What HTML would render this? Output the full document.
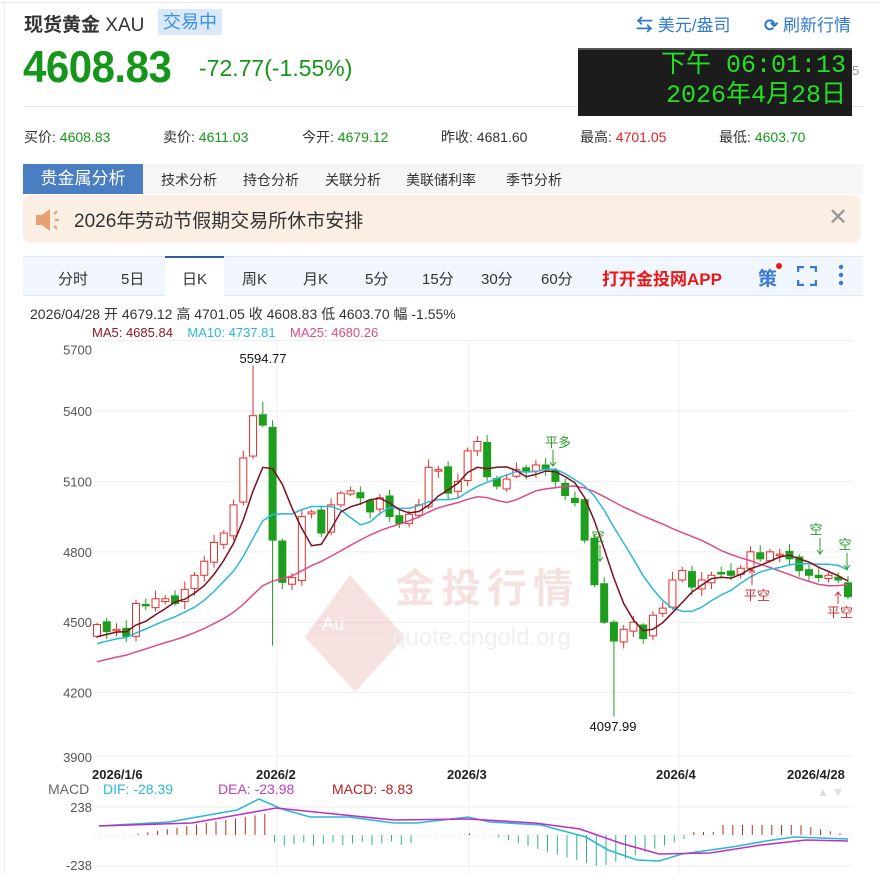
<!DOCTYPE html>
<html><head><meta charset="utf-8"><style>
*{margin:0;padding:0;box-sizing:border-box}
body{width:879px;height:874px;background:#fff;font-family:"Liberation Sans","Noto Sans CJK SC",sans-serif;position:relative;overflow:hidden;color:#333}
.a{position:absolute;white-space:nowrap}
</style></head><body>
<div class="a" style="left:0;top:2px;width:879px;height:1px;background:#e8e8e8"></div>
<div class="a" style="left:4px;top:3px;width:1px;height:871px;background:#eee"></div>
<div class="a" style="left:24px;top:10px;font-size:19px;font-weight:bold;color:#333">现货黄金 <span style="font-weight:normal">XAU</span></div>
<div class="a" style="left:158px;top:9px;width:64px;height:26px;background:#d9e9f8;color:#3a8ee6;font-size:18px;line-height:26px;text-align:center">交易中</div>
<div class="a" style="left:636px;top:11px;font-size:17px;color:#2f7ad0"><b>⇆</b> 美元/盎司</div>
<div class="a" style="left:764px;top:11px;font-size:17px;color:#2f7ad0"><b>⟳</b> 刷新行情</div>
<div class="a" style="left:23px;top:42px;font-size:42px;font-weight:bold;color:#15961a;letter-spacing:-0.5px;transform:scaleY(1.05);transform-origin:left top">4608.83</div>
<div class="a" style="left:199px;top:55px;font-size:23px;color:#15961a">-72.77(-1.55%)</div>
<div class="a" style="left:24px;top:106px;width:840px;height:1px;background:#e4e4e4"></div>
<div class="a" style="left:578px;top:48px;width:274px;height:68px;background:#1c1c1c;border-top:2px solid #555"></div>
<div class="a" style="left:580px;top:51px;width:266px;text-align:right;font-family:'Liberation Mono','Noto Sans CJK SC',monospace;color:#22e022;font-size:25px;line-height:30px">下午 06:01:13<br>2026年4月28日</div>
<div class="a" style="left:852px;top:63px;font-size:13px;color:#999">5</div>
<div class="a" style="left:24px;top:127px;font-size:14px;color:#333">买价: <span style="color:#15961a">4608.83</span></div>
<div class="a" style="left:163px;top:127px;font-size:14px">卖价: <span style="color:#15961a">4611.03</span></div>
<div class="a" style="left:302px;top:127px;font-size:14px">今开: <span style="color:#15961a">4679.12</span></div>
<div class="a" style="left:441px;top:127px;font-size:14px">昨收: 4681.60</div>
<div class="a" style="left:580px;top:127px;font-size:14px">最高: <span style="color:#d22">4701.05</span></div>
<div class="a" style="left:719px;top:127px;font-size:14px">最低: <span style="color:#15961a">4603.70</span></div>
<div class="a" style="left:23px;top:164px;width:840px;height:30px;background:#f6f6f6"></div>
<div class="a" style="left:23px;top:164px;width:120px;height:30px;background:#4a7ec2;color:#fff;font-size:17px;line-height:30px;text-align:center">贵金属分析</div>
<div class="a" style="left:161px;top:170px;font-size:14px">技术分析</div>
<div class="a" style="left:243px;top:170px;font-size:14px">持仓分析</div>
<div class="a" style="left:325px;top:170px;font-size:14px">关联分析</div>
<div class="a" style="left:406px;top:170px;font-size:14px">美联储利率</div>
<div class="a" style="left:506px;top:170px;font-size:14px">季节分析</div>
<div class="a" style="left:23px;top:195px;width:838px;height:48px;background:#fbeee3;border-radius:8px"></div>
<svg class="a" style="left:34px;top:207px" width="28" height="26" viewBox="0 0 28 26"><path d="M2 8h6l8-6v22l-8-6H2z" fill="#e8a070"/><path d="M20 7l3-3M21 13h4M20 19l3 3" stroke="#e8a070" stroke-width="2"/></svg>
<div class="a" style="left:74px;top:206px;font-size:19px;color:#333">2026年劳动节假期交易所休市安排</div>
<div class="a" style="left:828px;top:203px;font-size:24px;color:#999">✕</div>
<div class="a" style="left:23px;top:256px;width:840px;height:40px;background:#f1f6fc;border-top:1px solid #dfe8f2;border-bottom:1px solid #dfe8f2"></div>
<div class="a" style="left:165px;top:256px;width:59px;height:40px;background:#fff;border-top:2px solid #2f5fa0"></div>
<div class="a" style="left:58px;top:268px;font-size:15px">分时</div>
<div class="a" style="left:121px;top:268px;font-size:15px">5日</div>
<div class="a" style="left:182px;top:268px;font-size:15px">日K</div>
<div class="a" style="left:242px;top:268px;font-size:15px">周K</div>
<div class="a" style="left:303px;top:268px;font-size:15px">月K</div>
<div class="a" style="left:365px;top:268px;font-size:15px">5分</div>
<div class="a" style="left:422px;top:268px;font-size:15px">15分</div>
<div class="a" style="left:481px;top:268px;font-size:15px">30分</div>
<div class="a" style="left:541px;top:268px;font-size:15px">60分</div>
<div class="a" style="left:602px;top:265px;font-size:17px;font-weight:bold;color:#e81818">打开金投网APP</div>
<div class="a" style="left:758px;top:264px;font-size:19px;color:#3a7ad0;font-weight:bold">策</div>
<div class="a" style="left:776px;top:263px;width:6px;height:6px;border-radius:3px;background:#e81818"></div>
<svg class="a" style="left:797px;top:266px" width="20" height="20"><path d="M1 6V1h6M13 1h6v5M19 14v5h-6M7 19H1v-5" stroke="#3a7ad0" stroke-width="2.5" fill="none"/></svg>
<svg class="a" style="left:838px;top:264px" width="6" height="22"><circle cx="3" cy="3" r="2.2" fill="#3a7ad0"/><circle cx="3" cy="11" r="2.2" fill="#3a7ad0"/><circle cx="3" cy="19" r="2.2" fill="#3a7ad0"/></svg>
<div class="a" style="left:30px;top:304px;font-size:14px;color:#333">2026/04/28 开 4679.12 高 4701.05 收 4608.83 低 4603.70 幅 -1.55%</div>
<div class="a" style="left:92px;top:325px;font-size:13px"><span style="color:#8a1a2a">MA5: 4685.84</span>&nbsp;&nbsp;&nbsp;&nbsp;<span style="color:#2ab8d8">MA10: 4737.81</span>&nbsp;&nbsp;&nbsp;&nbsp;<span style="color:#e04a8a">MA25: 4680.26</span></div>
<svg id="ch" class="a" style="left:0;top:0" width="879" height="874"></svg>
<script>
var s='';
function Y(p){return 411+(5400-p)*0.2347;}
[5700,5400,5100,4800,4500,4200,3900].forEach(function(p){var y=Y(p);if(p==3900)y=756;var ty=y+5;if(p==5700)ty=y+14;if(p==3900)ty=y+6;s+='<line x1="95" x2="853" y1="'+y+'" y2="'+y+'" stroke="#eee"/><text x="92" y="'+ty+'" font-size="13" text-anchor="end" fill="#555">'+p+'</text>';});
[277,469,679].forEach(function(x){s+='<line x1="'+x+'" x2="'+x+'" y1="341" y2="874" stroke="#eee"/>';});
s+='<line x1="95" x2="853" y1="807" y2="807" stroke="#eee"/><line x1="95" x2="853" y1="866" y2="866" stroke="#eee"/>';
s+='<g opacity="0.13"><path d="M350 575l-45 62 50 55 50-55z" fill="#c02020"/><text x="395" y="602" font-size="40" fill="#c02020" font-weight="bold" letter-spacing="6">金投行情</text><text x="392" y="645" font-size="24" fill="#888">quote.cngold.org</text><text x="322" y="630" font-size="18" fill="#fff">Au</text></g>';
var c=[4490,4460,4470,4440,4580,4570,4600,4600,4580,4640,4700,4760,4840,4880,5000,5200,5380,5340,4850,4670,4690,4950,4970,4880,5000,5050,5060,5030,4970,5030,4950,4920,4960,5000,5160,5150,5050,5100,5230,5270,5120,5080,5110,5150,5140,5170,5150,5100,5040,5010,4850,4660,4500,4420,4470,4500,4430,4530,4560,4680,4720,4650,4680,4700,4710,4700,4730,4800,4770,4800,4790,4770,4720,4700,4690,4700,4680,4609];
var n=c.length,st=(848-97)/(n-1),pre=[];for(var i=0;i<30;i++)pre.push(4150+i*10);
var all=pre.concat(c);
for(var i=0;i<n;i++){var x=97+i*st,o=i?c[i-1]+((i*13)%7-3)*4:4440,cl=c[i];if(i==18)o=5330;var h=Math.max(o,cl)+8+(i*37)%28,l=Math.min(o,cl)-8-(i*23)%26;if(i==16)h=5594.77;if(i==53)l=4097.99;if(i==17)h=5440;if(i==18)l=4400;
var up=cl>=o,col=up?'#e0302c':'#1e9e1e',t=Y(Math.max(o,cl)),b=Y(Math.min(o,cl));if(b-t<1.5)b=t+1.5;
s+='<line x1="'+x+'" x2="'+x+'" y1="'+Y(h)+'" y2="'+Y(l)+'" stroke="'+col+'"/>';
s+='<rect x="'+(x-3.5)+'" y="'+t+'" width="7" height="'+(b-t)+'" fill="'+(up?'#fff':col)+'" stroke="'+col+'"/>';}
function ma(k,col){var d='';for(var i=0;i<n;i++){var j=i+30,sm=0;for(var q=0;q<k;q++)sm+=all[j-q];d+=(i?'L':'M')+(97+i*st).toFixed(1)+' '+Y(sm/k).toFixed(1);}s+='<path d="'+d+'" fill="none" stroke="'+col+'" stroke-width="1.5"/>';}
ma(25,'#e04a8a');ma(10,'#2ab8d8');ma(5,'#7a1020');
s+='<text x="263" y="363" font-size="13" text-anchor="middle" fill="#111">5594.77</text><text x="613" y="731" font-size="13" text-anchor="middle" fill="#111">4097.99</text>';
function sg(x,y,t,col){s+='<text x="'+x+'" y="'+y+'" font-size="13" fill="'+col+'" text-anchor="middle">'+t+'</text>';}
sg(558,447,'平多','#2a9a2a');s+='<path d="M553 450v16m-3-4l3 4 3-4" stroke="#2a9a2a" fill="none"/>';
sg(598,541,'空','#2a9a2a');s+='<path d="M600 545v16m-3-4l3 4 3-4" stroke="#2a9a2a" fill="none"/>';
sg(816,534,'空','#2a9a2a');s+='<path d="M820 538v16m-3-4l3 4 3-4" stroke="#2a9a2a" fill="none"/>';
sg(845,549,'空','#2a9a2a');s+='<path d="M847 553v16m-3-4l3 4 3-4" stroke="#2a9a2a" fill="none"/>';
sg(757,600,'平空','#d03030');s+='<path d="M752 585v-16m-3 4l3-4 3 4" stroke="#d03030" fill="none"/>';
sg(840,617,'平空','#d03030');s+='<path d="M838 604v-12m-3 4l3-4 3 4" stroke="#d03030" fill="none"/>';
s+='<g font-size="13" font-weight="bold" fill="#222"><text x="92" y="779">2026/1/6</text><text x="256" y="779">2026/2</text><text x="447" y="779">2026/3</text><text x="656" y="779">2026/4</text><text x="787" y="779">2026/4/28</text></g>';
s+='<text x="48" y="794" font-size="14" fill="#666">MACD</text><text x="103" y="794" font-size="14" fill="#2ab8d8">DIF: -28.39</text><text x="218" y="794" font-size="14" fill="#c040c0">DEA: -23.98</text><text x="332" y="794" font-size="14" fill="#c02020">MACD: -8.83</text>';
s+='<text x="817" y="796" font-size="12" fill="#ddd">▲ ▼</text>';
s+='<text x="92" y="812" font-size="13" text-anchor="end" fill="#555">238</text><text x="92" y="870" font-size="13" text-anchor="end" fill="#555">-238</text>';
for(var x=99;x<=848;x+=9.75){var v;
if(x<130)v=0;else if(x<270)v=(x-130)/140*22;else if(x<420)v=-6-((x*7)%5);else if(x<460)v=0;else if(x<475)v=1.5;else if(x<490)v=0;else if(x<600)v=-(x-490)/110*32;else if(x<690)v=-32+(x-600)/90*30;else if(x<720)v=3;else if(x<800)v=10;else v=10-(x-800)/48*10;
if(Math.abs(v)<0.5)continue;var col=v>0?'#b03020':'#30b090';s+='<line x1="'+x.toFixed(1)+'" x2="'+x.toFixed(1)+'" y1="835" y2="'+(835-v).toFixed(1)+'" stroke="'+col+'"/>';}
s+='<line x1="95" x2="853" y1="835" y2="835" stroke="#ddd" stroke-dasharray="1 2"/>';
s+='<path d="M99 826L169 822L237 810L259 799L282 809L310 817L349 817L394 823L417 823L468 817L490 822L541 825L586 837L608 850L637 860L659 861L682 854L732 847L766 841L794 837L848 839" fill="none" stroke="#2ab8d8" stroke-width="1.6"/>';
s+='<path d="M99 826L192 823L237 815L276 808L315 812L394 820L468 819L535 823L580 829L620 843L659 854L710 853L761 845L806 840L848 841" fill="none" stroke="#c030c0" stroke-width="1.6"/>';
document.getElementById('ch').innerHTML=s;
</script>
</body></html>
